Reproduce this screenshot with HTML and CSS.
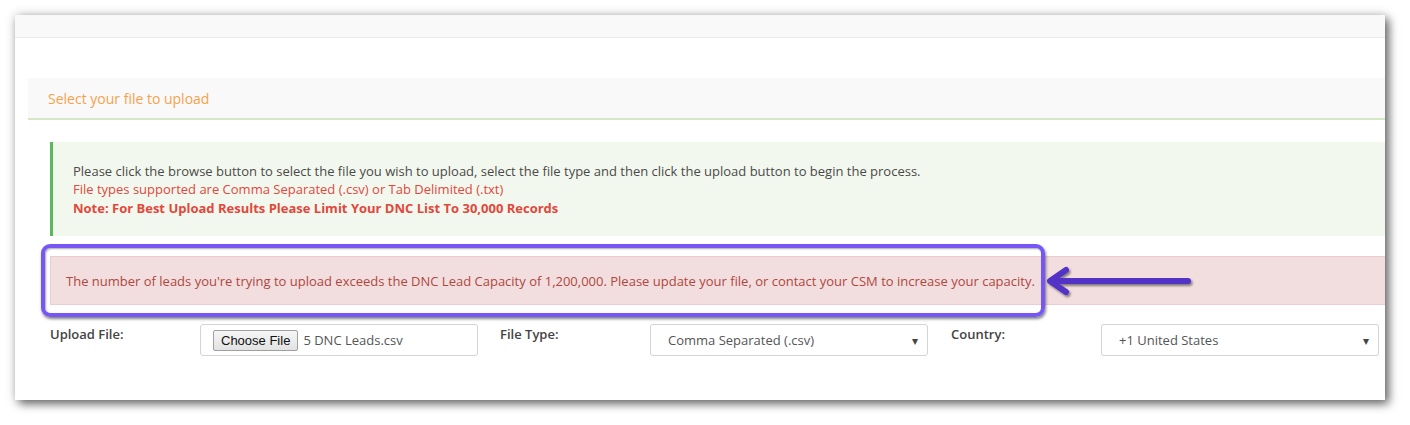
FILE: index.html
```html
<!DOCTYPE html>
<html>
<head>
<meta charset="utf-8">
<link rel="stylesheet" href="styles.css">
</head>
<body>
<div class="card">
  <div class="topbar"></div>
  <div class="panel">
    <div class="panel-heading">Select your file to upload</div>
    <div class="panel-body">
      <div class="alert-info">
        <div class="line">Please click the browse button to select the file you wish to upload, select the file type and then click the upload button to begin the process.</div>
        <div class="line red">File types supported are Comma Separated (.csv) or Tab Delimited (.txt)</div>
        <div class="line red bold">Note: For Best Upload Results Please Limit Your DNC List To 30,000 Records</div>
      </div>
      <div class="alert-danger">The number of leads you're trying to upload exceeds the DNC Lead Capacity of 1,200,000. Please update your file, or contact your CSM to increase your capacity.</div>
      <div class="form-row">
        <div class="group">
          <label class="lbl">Upload File:</label>
          <div class="control file">
            <span class="file-btn">Choose File</span>
            <span class="file-name">5 DNC Leads.csv</span>
          </div>
        </div>
        <div class="group">
          <label class="lbl">File Type:</label>
          <div class="control select">
            <span>Comma Separated (.csv)</span>
            <span class="caret">▾</span>
          </div>
        </div>
        <div class="group">
          <label class="lbl">Country:</label>
          <div class="control select">
            <span>+1 United States</span>
            <span class="caret">▾</span>
          </div>
        </div>
      </div>
    </div>
  </div>
  <div class="highlight"></div>
  <svg class="arrow" width="170" height="40" viewBox="0 0 170 40">
    <defs>
      <filter id="sh" x="-10%" y="-30%" width="130%" height="180%">
        <feDropShadow dx="1.5" dy="2" stdDeviation="1.2" flood-color="#000" flood-opacity="0.45"/>
      </filter>
    </defs>
    <g filter="url(#sh)" stroke="#5232c6" stroke-width="6" stroke-linecap="round" stroke-linejoin="round" fill="none">
      <path d="M146 16 L10 16"/>
      <path d="M24 5 L8 16 L24 27"/>
    </g>
  </svg>
</div>
</body>
</html>
```

FILE: styles.css
```css
html, body {
  margin: 0;
  padding: 0;
  background: #ffffff;
}
body {
  padding: 15px;
  font-family: "Open Sans", "Liberation Sans", sans-serif;
  font-size: 13px;
}
.card {
  position: relative;
  width: 1370px;
  height: 385px;
  background: #ffffff;
  overflow: hidden;
  box-shadow: 4px 4px 9px rgba(0,0,0,0.55), 0 0 10px rgba(0,0,0,0.18);
}
.topbar {
  height: 22px;
  background: #f9f9f9;
  border-bottom: 1px solid #ebebeb;
}
.panel {
  margin: 40px 0 0 13px;
  width: 1420px;
}
.panel-heading {
  height: 42px;
  box-sizing: border-box;
  padding: 11px 20px 0;
  background: #f9f9f9;
  border-bottom: 2px solid #d4e8c4;
  color: #f5a24c;
  font-size: 14px;
  line-height: 20px;
}
.panel-body {
  padding: 22px 0 0 22px;
}
.alert-info {
  height: 94px;
  box-sizing: border-box;
  padding: 20px 20px 0 20px;
  background: #f3f8ef;
  border-left: 3px solid #5cb85c;
  color: #4a4a4a;
  line-height: 18px;
}
.alert-info .line:nth-child(3) {
  margin-top: 1px;
}
.red { color: #e2473b; }
.bold { font-weight: 700; }
.alert-danger {
  margin-top: 20px;
  height: 49px;
  box-sizing: border-box;
  padding: 15px 15px 0;
  background: #f2dede;
  border: 1px solid #ebccd1;
  color: #b0473f;
  line-height: 18px;
}
.form-row {
  display: flex;
  margin-top: 19px;
}
.group {
  display: flex;
  width: 450px;
  flex: none;
}
.group:nth-child(2) { width: 451px; }
.lbl {
  width: 150px;
  flex: none;
  padding-top: 1px;
  font-weight: 600;
  color: #444;
  line-height: 18px;
}
.control {
  width: 278px;
  height: 32px;
  box-sizing: border-box;
  border: 1px solid #d4d4d4;
  border-radius: 3px;
  display: flex;
  align-items: center;
  color: #555;
}
.file {
  padding-left: 12px;
}
.file-btn {
  font-family: "Liberation Sans", Arial, sans-serif;
  font-size: 13px;
  color: #111;
  height: 21px;
  line-height: 19px;
  box-sizing: border-box;
  padding: 0 7px;
  border: 1px solid #a0a0a0;
  border-radius: 2px;
  background: linear-gradient(#f6f6f6, #e2e2e2);
}
.file-name {
  margin-left: 5px;
}
.select {
  padding: 0 9px 0 17px;
  justify-content: space-between;
}
.caret {
  font-size: 12px;
  color: #444;
}
.highlight {
  position: absolute;
  left: 26px;
  top: 229px;
  width: 1004px;
  height: 73px;
  box-sizing: border-box;
  border: 4px solid #7657f5;
  border-radius: 9px;
  box-shadow: 1px 2px 3px rgba(0,0,0,0.5), inset 1px 1px 2px rgba(0,0,0,0.35);
}
.arrow {
  position: absolute;
  left: 1027px;
  top: 250px;
}
```
